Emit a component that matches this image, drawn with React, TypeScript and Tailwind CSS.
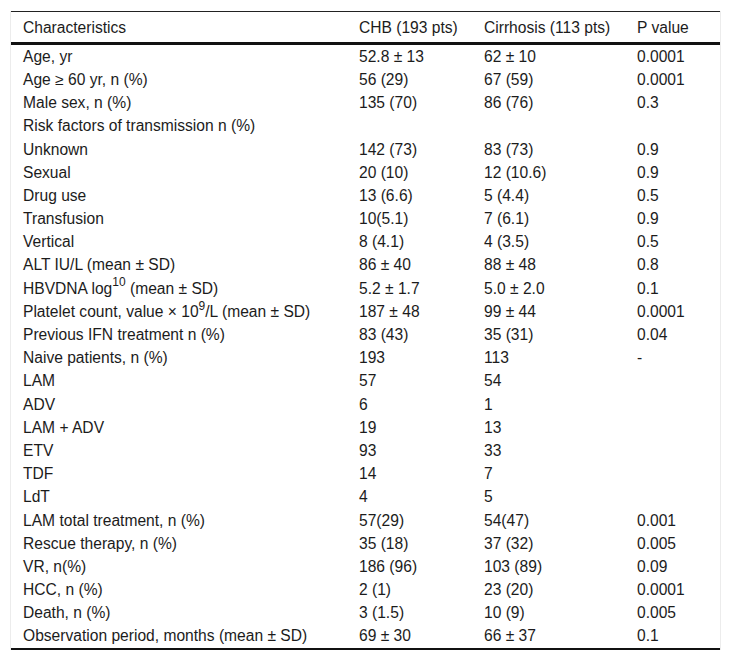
import React from "react";

type Row = [React.ReactNode, string, string, string];

const rows: Row[] = [
  ["Age, yr", "52.8 ± 13", "62 ± 10", "0.0001"],
  ["Age ≥ 60 yr, n (%)", "56 (29)", "67 (59)", "0.0001"],
  ["Male sex, n (%)", "135 (70)", "86 (76)", "0.3"],
  ["Risk factors of transmission n (%)", "", "", ""],
  ["Unknown", "142 (73)", "83 (73)", "0.9"],
  ["Sexual", "20 (10)", "12 (10.6)", "0.9"],
  ["Drug use", "13 (6.6)", "5 (4.4)", "0.5"],
  ["Transfusion", "10(5.1)", "7 (6.1)", "0.9"],
  ["Vertical", "8 (4.1)", "4 (3.5)", "0.5"],
  ["ALT IU/L (mean ± SD)", "86 ± 40", "88 ± 48", "0.8"],
  [
    <>
      HBVDNA log<sup className="text-[12px] top-[-0.6em]">10</sup> (mean ± SD)
    </>,
    "5.2 ± 1.7",
    "5.0 ± 2.0",
    "0.1",
  ],
  [
    <>
      Platelet count, value × 10<sup className="text-[12px] top-[-0.6em]">9</sup>/L (mean ± SD)
    </>,
    "187 ± 48",
    "99 ± 44",
    "0.0001",
  ],
  ["Previous IFN treatment n (%)", "83 (43)", "35 (31)", "0.04"],
  ["Naive patients, n (%)", "193", "113", "-"],
  ["LAM", "57", "54", ""],
  ["ADV", "6", "1", ""],
  ["LAM + ADV", "19", "13", ""],
  ["ETV", "93", "33", ""],
  ["TDF", "14", "7", ""],
  ["LdT", "4", "5", ""],
  ["LAM total treatment, n (%)", "57(29)", "54(47)", "0.001"],
  ["Rescue therapy, n (%)", "35 (18)", "37 (32)", "0.005"],
  ["VR, n(%)", "186 (96)", "103 (89)", "0.09"],
  ["HCC, n (%)", "2 (1)", "23 (20)", "0.0001"],
  ["Death, n (%)", "3 (1.5)", "10 (9)", "0.005"],
  ["Observation period, months (mean ± SD)", "69 ± 30", "66 ± 37", "0.1"],
];

const cols = "grid grid-cols-[336px_125px_153px_96px]";

export default function App() {
  return (
    <div className="min-h-[660px] bg-white pt-[11px] pl-[10px] text-[15.6px] text-[#1c1c1c] font-['Liberation_Sans',Arial,sans-serif]">
      <div className="w-[711px] border-x border-[#ececec]">
        <div className="border-t border-[#222] border-b-[3px] border-b-[#111]">
          <div className={`${cols} h-[30px] items-center pt-[1px]`}>
            <div className="pl-3">Characteristics</div>
            <div className="pl-3">CHB (193 pts)</div>
            <div className="pl-3">Cirrhosis (113 pts)</div>
            <div className="pl-3">P value</div>
          </div>
        </div>
        <div className="border-b-2 border-[#111]">
          {rows.map((r, i) => (
            <div key={i} className={`${cols} h-[23.2px] items-center leading-none`}>
              <div className="pl-3 whitespace-nowrap">{r[0]}</div>
              <div className="pl-3">{r[1]}</div>
              <div className="pl-3">{r[2]}</div>
              <div className="pl-3">{r[3]}</div>
            </div>
          ))}
        </div>
      </div>
    </div>
  );
}
